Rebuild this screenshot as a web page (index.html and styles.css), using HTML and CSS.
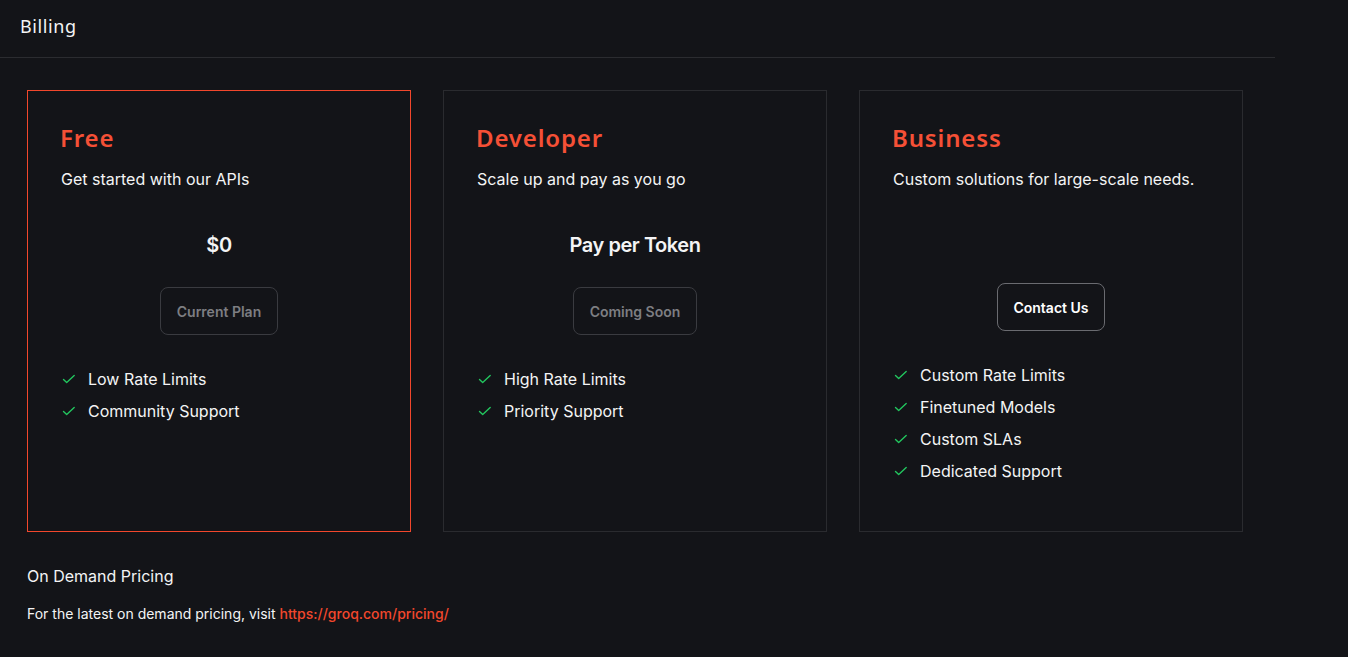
FILE: index.html
```html
<!DOCTYPE html>
<html lang="en">
<head>
<meta charset="utf-8">
<title>Billing</title>
<link rel="stylesheet" href="styles.css">
</head>
<body>
<header class="topbar">
  <h1 class="page-title">Billing</h1>
</header>
<main class="content">
  <section class="plans">
    <article class="plan plan-active">
      <h2 class="plan-name">Free</h2>
      <p class="plan-desc">Get started with our APIs</p>
      <div class="plan-price">$0</div>
      <div class="plan-action"><button class="btn btn-disabled">Current Plan</button></div>
      <ul class="features">
        <li><svg class="check" viewBox="0 0 16 16"><path d="M2.5 8.5l3.2 3 7.5-7"/></svg>Low Rate Limits</li>
        <li><svg class="check" viewBox="0 0 16 16"><path d="M2.5 8.5l3.2 3 7.5-7"/></svg>Community Support</li>
      </ul>
    </article>
    <article class="plan">
      <h2 class="plan-name">Developer</h2>
      <p class="plan-desc">Scale up and pay as you go</p>
      <div class="plan-price">Pay per Token</div>
      <div class="plan-action"><button class="btn btn-disabled">Coming Soon</button></div>
      <ul class="features">
        <li><svg class="check" viewBox="0 0 16 16"><path d="M2.5 8.5l3.2 3 7.5-7"/></svg>High Rate Limits</li>
        <li><svg class="check" viewBox="0 0 16 16"><path d="M2.5 8.5l3.2 3 7.5-7"/></svg>Priority Support</li>
      </ul>
    </article>
    <article class="plan">
      <h2 class="plan-name">Business</h2>
      <p class="plan-desc">Custom solutions for large-scale needs.</p>
      <div class="plan-price plan-price-empty"></div>
      <div class="plan-action"><button class="btn btn-primary">Contact Us</button></div>
      <ul class="features">
        <li><svg class="check" viewBox="0 0 16 16"><path d="M2.5 8.5l3.2 3 7.5-7"/></svg>Custom Rate Limits</li>
        <li><svg class="check" viewBox="0 0 16 16"><path d="M2.5 8.5l3.2 3 7.5-7"/></svg>Finetuned Models</li>
        <li><svg class="check" viewBox="0 0 16 16"><path d="M2.5 8.5l3.2 3 7.5-7"/></svg>Custom SLAs</li>
        <li><svg class="check" viewBox="0 0 16 16"><path d="M2.5 8.5l3.2 3 7.5-7"/></svg>Dedicated Support</li>
      </ul>
    </article>
  </section>
  <section class="on-demand">
    <h3 class="od-title">On Demand Pricing</h3>
    <p class="od-text">For the latest on demand pricing, visit <a class="od-link" href="#">https://groq.com/pricing/</a></p>
  </section>
</main>
</body>
</html>
```
FILE: styles.css
```css
* { box-sizing: border-box; }
html, body {
  margin: 0;
  padding: 0;
  background: #131418;
  color: #f4f4f5;
  font-family: Inter, "Liberation Sans", sans-serif;
}
.topbar {
  width: 1275px;
  height: 58px;
  border-bottom: 1px solid #2b2c30;
  padding: 0 20px;
  display: flex;
  align-items: center;
  padding-bottom: 5px;
}
.page-title {
  margin: 0;
  font-family: "Noto Sans", Inter, sans-serif;
  font-weight: 400;
  font-size: 18px;
  letter-spacing: 0.6px;
  color: #f4f4f5;
}
.content {
  padding: 32px 27px;
}
.plans {
  display: grid;
  grid-template-columns: repeat(3, 384px);
  gap: 32px;
}
.plan {
  height: 442px;
  border: 1px solid #2a2b2f;
  padding: 31px 33px;
  display: flex;
  flex-direction: column;
}
.plan-active {
  border-color: #f2472c;
}
.plan-name {
  margin: 0 0 0 -1px;
  font-family: "Noto Sans", Inter, sans-serif;
  font-size: 24px;
  line-height: 32px;
  font-weight: 600;
  letter-spacing: 0.85px;
  color: #f55036;
}
.plan-desc {
  margin: 13px 0 0;
  font-size: 16px;
  line-height: 24px;
  color: #f4f4f5;
}
.plan-price {
  margin-top: 40px;
  height: 28px;
  font-size: 20px;
  line-height: 28px;
  font-weight: 600;
  letter-spacing: -0.45px;
  text-align: center;
  color: #f4f4f5;
}
.plan-price-empty {
  height: 24px;
}
.plan-action {
  margin-top: 28px;
  display: flex;
  justify-content: center;
}
.btn {
  height: 48px;
  padding: 0 16px;
  border-radius: 8px;
  background: transparent;
  font-family: Inter, sans-serif;
  font-size: 14px;
  font-weight: 600;
}
.btn-disabled {
  border: 1px solid #3a3b40;
  color: #7d7e82;
}
.btn-primary {
  padding: 0 15px;
  border: 1px solid #6a6b70;
  color: #ffffff;
}
.features {
  list-style: none;
  margin: 32px 0 0;
  padding: 0;
  display: flex;
  flex-direction: column;
  gap: 8px;
}
.features li {
  display: flex;
  align-items: center;
  gap: 11px;
  font-size: 16px;
  line-height: 24px;
  color: #f4f4f5;
}
.check {
  width: 16px;
  height: 16px;
  fill: none;
  stroke: #22c55e;
  stroke-width: 1.4;
  stroke-linecap: round;
  stroke-linejoin: round;
}
.on-demand {
  margin-top: 32px;
}
.od-title {
  margin: 0;
  font-size: 16px;
  line-height: 24px;
  font-weight: 400;
}
.od-text {
  margin: 16px 0 0;
  font-size: 14px;
  line-height: 20px;
}
.od-link {
  color: #f2472c;
  font-weight: 500;
  text-decoration: none;
}
```
